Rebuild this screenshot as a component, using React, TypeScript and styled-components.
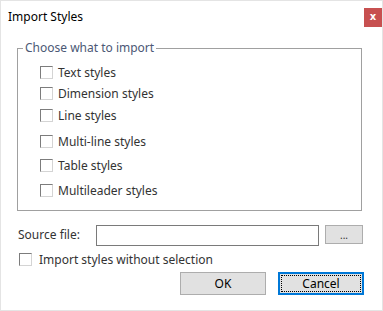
import React from "react";
import styled, { createGlobalStyle } from "styled-components";

const GlobalStyle = createGlobalStyle`
  html, body {
    margin: 0;
    padding: 0;
    background: #ffffff;
  }
  body {
    font-family: "Noto Sans", "Open Sans", Arial, sans-serif;
    font-size: 12px;
    color: #1e1e1e;
  }
`;

const options = [
  { label: "Text styles", space: 0 },
  { label: "Dimension styles", space: 8 },
  { label: "Line styles", space: 9 },
  { label: "Multi-line styles", space: 13 },
  { label: "Table styles", space: 11 },
  { label: "Multileader styles", space: 12 },
];

const App = () => {
  return (
    <>
      <GlobalStyle />
      <Window>
        <TitleBar>
          <Title>Import Styles</Title>
          <CloseButton aria-label="Close">x</CloseButton>
        </TitleBar>

        <Group>
          <Legend>Choose what to import</Legend>
          <OptionList>
            {options.map((o) => (
              <Option key={o.label} $space={o.space}>
                <Box />
                <span>{o.label}</span>
              </Option>
            ))}
          </OptionList>
        </Group>

        <SourceRow>
          <Label>Source file:</Label>
          <PathInput />
          <BrowseButton>...</BrowseButton>
        </SourceRow>

        <StandaloneOption>
          <Box />
          <span>Import styles without selection</span>
        </StandaloneOption>

        <Footer>
          <Button>OK</Button>
          <Button $focused>
            <FocusRing>Cancel</FocusRing>
          </Button>
        </Footer>
      </Window>
    </>
  );
};

export default App;

const Window = styled.div`
  width: 383px;
  height: 311px;
  box-sizing: border-box;
  border: 1px solid #e4e4e4;
  border-right-width: 1px;
  display: flex;
  flex-direction: column;
  background: #fff;
`;

const TitleBar = styled.div`
  display: flex;
  align-items: flex-start;
  justify-content: space-between;
  height: 39px;
  padding-left: 7px;
`;

const Title = styled.div`
  margin-top: 7px;
  font-size: 12px;
  color: #000;
`;

const CloseButton = styled.div`
  margin-top: 7px;
  width: 18px;
  height: 19px;
  background: #c75050;
  color: #fff;
  font-family: "DejaVu Sans", sans-serif;
  font-weight: bold;
  font-size: 10px;
  line-height: 17px;
  text-align: center;
`;

const Group = styled.fieldset`
  margin: 0 20px 0 16px;
  padding: 0 0 13px 5px;
  border: 1px solid #a0a0a0;
  min-width: 0;
`;

const Legend = styled.legend`
  padding: 0 2px;
  color: #4b5875;
  font-size: 12px;
  line-height: 16px;
`;

const OptionList = styled.div`
  display: flex;
  flex-direction: column;
  padding: 10px 0 0 17px;
`;

const Option = styled.label<{ $space: number }>`
  display: flex;
  align-items: center;
  gap: 5px;
  height: 13px;
  margin-top: ${(p) => p.$space}px;
  color: #333;
  line-height: 13px;
`;

const Box = styled.span`
  display: inline-block;
  width: 13px;
  height: 13px;
  box-sizing: border-box;
  border-top: 1px solid #7c7c7c;
  border-left: 1px solid #7c7c7c;
  border-right: 1px solid #d4d4d4;
  border-bottom: 1px solid #d4d4d4;
  background: #fff;
  flex: none;
`;

const SourceRow = styled.div`
  display: flex;
  align-items: flex-start;
  margin: 14px 0 0 17px;
`;

const Label = styled.span`
  width: 78px;
  line-height: 20px;
  color: #333;
`;

const PathInput = styled.div`
  width: 223px;
  height: 21px;
  box-sizing: border-box;
  border: 1px solid #7a7a7a;
  background: #fff;
`;

const BrowseButton = styled.div`
  margin-left: 6px;
  width: 38px;
  height: 19px;
  box-sizing: border-box;
  border: 1px solid #adadad;
  background: #e1e1e1;
  font-size: 10px;
  line-height: 18px;
  text-align: center;
  color: #333;
`;

const StandaloneOption = styled.label`
  display: flex;
  align-items: center;
  gap: 7px;
  height: 13px;
  margin: 7px 0 0 18px;
  color: #333;
`;

const Footer = styled.div`
  display: flex;
  justify-content: flex-end;
  gap: 12px;
  margin: 6px 18px 0 0;
`;

const Button = styled.div<{ $focused?: boolean }>`
  width: 86px;
  height: 23px;
  box-sizing: border-box;
  display: flex;
  align-items: center;
  justify-content: center;
  padding: ${(p) => (p.$focused ? "1px" : "0")};
  border: ${(p) => (p.$focused ? "2px solid #0078d7" : "1px solid #adadad")};
  background: #e1e1e1;
  color: #000;
`;

const FocusRing = styled.span`
  flex: 1;
  align-self: stretch;
  display: flex;
  align-items: center;
  justify-content: center;
  border: 1px dotted #000;
`;
